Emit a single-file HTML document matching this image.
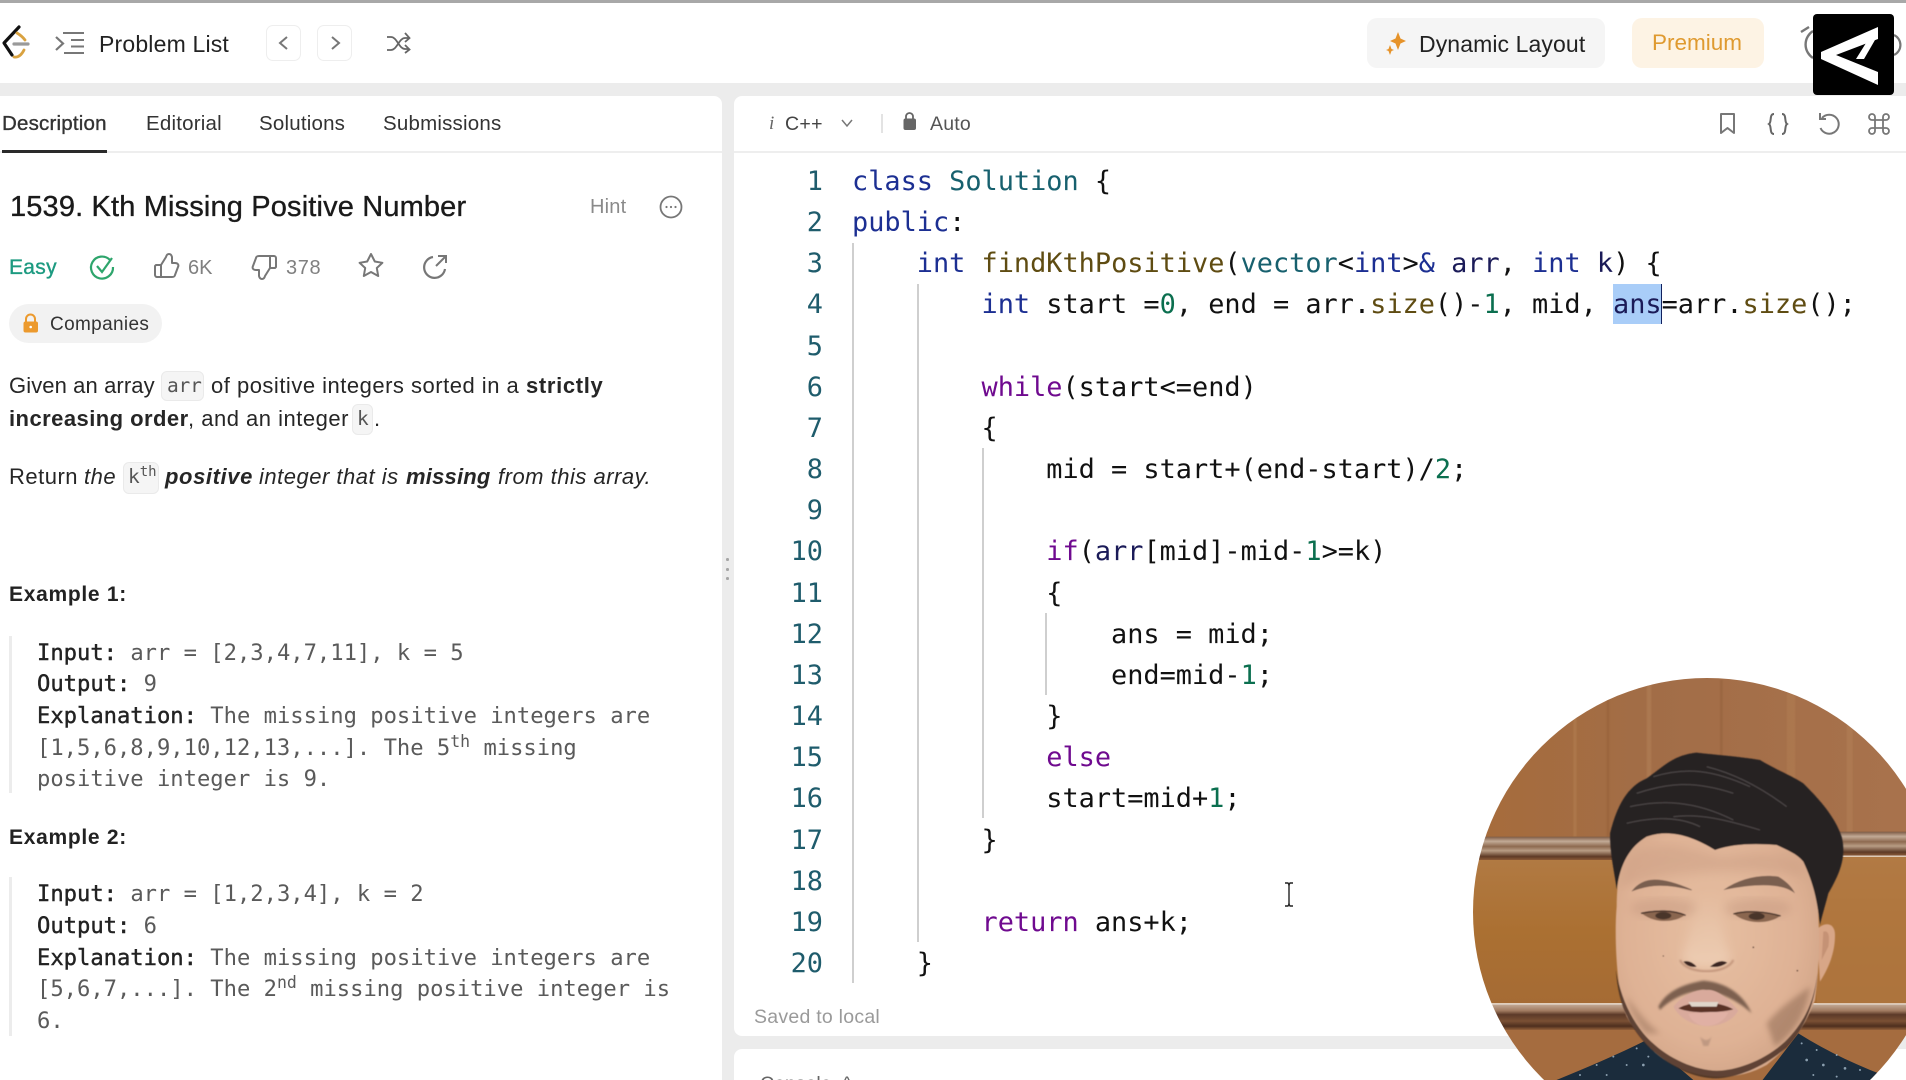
<!DOCTYPE html>
<html><head><meta charset="utf-8"><style>
html,body{margin:0;padding:0;width:1906px;height:1080px;overflow:hidden;background:#fff;font-family:"Liberation Sans",sans-serif;color:#262626}
#w{position:relative;width:1906px;height:1080px;overflow:hidden;background:#fff;filter:blur(.3px)}
.b{position:absolute}
.t{position:absolute;white-space:pre;line-height:40px;height:40px;margin-top:1px}
.s{-webkit-text-stroke:.35px currentColor}
.tab{font-size:20.5px;letter-spacing:.2px;top:103px;color:#333}
.p{font-size:22px;letter-spacing:.5px;color:#262626}
.bd{font-weight:bold;letter-spacing:.45px}
.i{font-style:italic}
.chip{position:absolute;background:#f5f5f5;border:1px solid #eaeaea;border-radius:6px;box-sizing:border-box}
.m{font-family:"DejaVu Sans Mono",monospace;font-size:22.15px;color:#5a5a5a;letter-spacing:0;position:absolute;white-space:pre;line-height:32px;height:32px;left:37px;margin-top:1px}
.m b{font-weight:normal;color:#222;-webkit-text-stroke:.4px #222}
.m sup{font-size:16.5px;line-height:0;vertical-align:8px}
.ex{font-size:21px;font-weight:bold;letter-spacing:.7px;left:9px;color:#222}
.n,.c{font-family:"DejaVu Sans Mono",monospace;font-size:26.9px;position:absolute;white-space:pre;line-height:41px;height:41px;margin-top:1px}
.n{left:750px;width:73px;text-align:right;color:#1f5c6c}
.c{left:852px;color:#111}
.k{color:#1c2f92}.ty{color:#17606e}.f{color:#5f4c12}.d{color:#0b6f4f}.w{color:#6f0a8f}.v{color:#1b1b58}
.g{position:absolute;width:1.5px;background:#cfcfcf}
</style></head><body><div id="w">

<!-- frame -->
<div class="b" style="left:0;top:0;width:1906px;height:3px;background:#a8a8a8"></div>
<div class="b" style="left:0;top:83px;width:1906px;height:997px;background:#ececec"></div>
<div class="b" style="left:0;top:96px;width:722px;height:984px;background:#fff;border-top-right-radius:8px"></div>
<div class="b" style="left:734px;top:96px;width:1172px;height:940px;background:#fff;border-radius:8px 0 0 8px"></div>
<div class="b" style="left:734px;top:1049px;width:1172px;height:31px;background:#fff;border-radius:8px 0 0 0"></div>
<div class="b" style="left:0;top:151px;width:722px;height:1.5px;background:#eee"></div>
<div class="b" style="left:2px;top:150px;width:105px;height:2.5px;background:#2a2a2a"></div>
<div class="b" style="left:734px;top:151px;width:1172px;height:1.5px;background:#eee"></div>
<div class="b" style="left:726px;top:558px;width:2.5px;height:2.5px;background:#a5a5a5;border-radius:50%"></div>
<div class="b" style="left:726px;top:568px;width:2.5px;height:2.5px;background:#a5a5a5;border-radius:50%"></div>
<div class="b" style="left:726px;top:577px;width:2.5px;height:2.5px;background:#a5a5a5;border-radius:50%"></div>

<!-- header -->
<div class="t" style="left:99px;top:23px;font-size:23px;letter-spacing:.18px;color:#222">Problem List</div>
<div class="b" style="left:266px;top:25px;width:35px;height:36px;box-sizing:border-box;border:1.5px solid #eee;border-radius:7px"></div>
<div class="b" style="left:317px;top:25px;width:35px;height:36px;box-sizing:border-box;border:1.5px solid #eee;border-radius:7px"></div>
<div class="b" style="left:1367px;top:18px;width:238px;height:50px;background:#f5f5f5;border-radius:10px"></div>
<div class="t" style="left:1419px;top:23px;font-size:23px;letter-spacing:.1px;color:#222">Dynamic Layout</div>
<div class="b" style="left:1632px;top:18px;width:132px;height:50px;background:#fdf3e4;border-radius:10px"></div>
<div class="t" style="left:1652px;top:22px;font-size:22.5px;color:#df9a30">Premium</div>

<!-- tabs -->
<div class="t tab s" style="left:2px">Description</div>
<div class="t tab" style="left:146px">Editorial</div>
<div class="t tab" style="left:259px">Solutions</div>
<div class="t tab" style="left:383px">Submissions</div>

<!-- title -->
<div class="t s" style="left:10px;top:186px;font-size:29px;letter-spacing:.15px;color:#1a1a1a">1539. Kth Missing Positive Number</div>
<div class="t" style="left:590px;top:186px;font-size:20px;letter-spacing:.2px;color:#8a8a8a">Hint</div>
<div class="t s" style="left:9px;top:247px;font-size:21px;letter-spacing:.3px;color:#1c9a80">Easy</div>
<div class="t" style="left:188px;top:247px;font-size:20px;color:#808080">6K</div>
<div class="t" style="left:286px;top:247px;font-size:20px;letter-spacing:.6px;color:#808080">378</div>
<div class="b" style="left:9px;top:304px;width:153px;height:39px;background:#f2f2f2;border-radius:20px"></div>
<div class="t" style="left:50px;top:304px;font-size:19px;letter-spacing:.35px;color:#333">Companies</div>

<!-- description -->
<div class="chip" style="left:161px;top:371px;width:43px;height:30px"></div>
<div class="chip" style="left:352px;top:404px;width:21px;height:31px"></div>
<div class="chip" style="left:123px;top:462px;width:36px;height:32px"></div>
<div class="t p" style="left:9px;top:365px;letter-spacing:.1px">Given an array</div>
<div class="t" style="left:167px;top:365px;font:19.5px/40px 'DejaVu Sans Mono',monospace;color:#555;letter-spacing:-.2px">arr</div>
<div class="t p" style="left:211px;top:365px">of positive integers sorted in a</div>
<div class="t p bd" style="left:526px;top:365px;letter-spacing:.65px">strictly</div>
<div class="t p bd" style="left:9px;top:398px">increasing order</div>
<div class="t p" style="left:188px;top:398px">, and an integer</div>
<div class="t" style="left:357px;top:398px;font:19.5px/40px 'DejaVu Sans Mono',monospace;color:#555">k</div>
<div class="t p" style="left:374px;top:398px">.</div>
<div class="t p" style="left:9px;top:456px">Return</div>
<div class="t p i" style="left:84px;top:456px">the</div>
<div class="t" style="left:128px;top:456px;font:19.5px/40px 'DejaVu Sans Mono',monospace;color:#555">k<sup style="font-size:14px;line-height:0;vertical-align:7px">th</sup></div>
<div class="t p bd i" style="left:165px;top:456px;letter-spacing:.6px">positive</div>
<div class="t p i" style="left:259px;top:456px">integer that is</div>
<div class="t p bd i" style="left:406px;top:456px;letter-spacing:.2px">missing</div>
<div class="t p i" style="left:498px;top:456px">from this array.</div>

<!-- examples -->
<div class="t ex" style="top:574px">Example 1:</div>
<div class="b" style="left:9px;top:636px;width:3px;height:157px;background:#ececec"></div>
<div class="m" style="top:636px"><b>Input:</b> arr = [2,3,4,7,11], k = 5</div>
<div class="m" style="top:667px"><b>Output:</b> 9</div>
<div class="m" style="top:699px"><b>Explanation:</b> The missing positive integers are</div>
<div class="m" style="top:731px">[1,5,6,8,9,10,12,13,...]. The 5<sup>th</sup> missing</div>
<div class="m" style="top:762px">positive integer is 9.</div>
<div class="t ex" style="top:817px">Example 2:</div>
<div class="b" style="left:9px;top:877px;width:3px;height:159px;background:#ececec"></div>
<div class="m" style="top:877px"><b>Input:</b> arr = [1,2,3,4], k = 2</div>
<div class="m" style="top:909px"><b>Output:</b> 6</div>
<div class="m" style="top:941px"><b>Explanation:</b> The missing positive integers are</div>
<div class="m" style="top:972px">[5,6,7,...]. The 2<sup>nd</sup> missing positive integer is</div>
<div class="m" style="top:1004px">6.</div>

<!-- toolbar -->
<div class="t i" style="left:769px;top:103px;font-size:19px;font-family:'Liberation Serif',serif;color:#666">i</div>
<div class="t" style="left:785px;top:103px;font-size:19.5px;letter-spacing:.3px;color:#444">C++</div>
<div class="b" style="left:881px;top:114px;width:1.5px;height:19px;background:#e3e3e3"></div>
<div class="t" style="left:930px;top:103px;font-size:19.5px;letter-spacing:.2px;color:#555">Auto</div>

<!-- code guides + selection -->
<div class="g" style="left:852px;top:243px;height:740px"></div>
<div class="g" style="left:917px;top:284px;height:658px"></div>
<div class="g" style="left:982px;top:448px;height:370px"></div>
<div class="g" style="left:1045px;top:613px;height:82px"></div>
<div class="b" style="left:1613px;top:284px;width:48px;height:40px;background:#a9cdf8"></div>
<div class="b" style="left:1660.5px;top:284px;width:1.8px;height:40px;background:#12215e"></div>

<!-- line numbers -->
<div class="n" style="top:160px">1</div><div class="n" style="top:201px">2</div><div class="n" style="top:242px">3</div><div class="n" style="top:283px">4</div><div class="n" style="top:325px">5</div><div class="n" style="top:366px">6</div><div class="n" style="top:407px">7</div><div class="n" style="top:448px">8</div><div class="n" style="top:489px">9</div><div class="n" style="top:530px">10</div><div class="n" style="top:572px">11</div><div class="n" style="top:613px">12</div><div class="n" style="top:654px">13</div><div class="n" style="top:695px">14</div><div class="n" style="top:736px">15</div><div class="n" style="top:777px">16</div><div class="n" style="top:819px">17</div><div class="n" style="top:860px">18</div><div class="n" style="top:901px">19</div><div class="n" style="top:942px">20</div>

<!-- code -->
<div class="c" style="top:160px"><span class="k">class</span> <span class="ty">Solution</span> {</div>
<div class="c" style="top:201px"><span class="k">public</span>:</div>
<div class="c" style="top:242px">    <span class="k">int</span> <span class="f">findKthPositive</span>(<span class="ty">vector</span>&lt;<span class="k">int</span>&gt;<span class="k">&amp;</span> <span class="v">arr</span>, <span class="k">int</span> <span class="v">k</span>) {</div>
<div class="c" style="top:283px">        <span class="k">int</span> start =<span class="d">0</span>, end = arr.<span class="f">size</span>()-<span class="d">1</span>, mid, <span class="v">ans</span>=arr.<span class="f">size</span>();</div>
<div class="c" style="top:366px">        <span class="w">while</span>(start&lt;=end)</div>
<div class="c" style="top:407px">        {</div>
<div class="c" style="top:448px">            mid = start+(end-start)/<span class="d">2</span>;</div>
<div class="c" style="top:530px">            <span class="w">if</span>(<span class="v">arr</span>[mid]-mid-<span class="d">1</span>&gt;=k)</div>
<div class="c" style="top:572px">            {</div>
<div class="c" style="top:613px">                ans = mid;</div>
<div class="c" style="top:654px">                end=mid-<span class="d">1</span>;</div>
<div class="c" style="top:695px">            }</div>
<div class="c" style="top:736px">            <span class="w">else</span></div>
<div class="c" style="top:777px">            start=mid+<span class="d">1</span>;</div>
<div class="c" style="top:819px">        }</div>
<div class="c" style="top:901px">        <span class="w">return</span> ans+k;</div>
<div class="c" style="top:942px">    }</div>

<div class="t" style="left:754px;top:996px;font-size:19.5px;letter-spacing:.25px;color:#9a9a9a">Saved to local</div>
<div class="t" style="left:760px;top:1063px;font-size:19.5px;color:#666">Console  ^</div>

<!-- icons -->
<svg class="b" style="left:0;top:0" width="1906" height="1080" viewBox="0 0 1906 1080" fill="none">
 <!-- logo -->
 <path d="M19 27 L4 43 L12 55" stroke="#111" stroke-width="3.2" stroke-linecap="round" stroke-linejoin="round"/>
 <path d="M17 33 Q22 36 25 40" stroke="#d9a240" stroke-width="2.8" stroke-linecap="round"/>
 <path d="M14 57 Q20 58 24 50" stroke="#d9a240" stroke-width="2.8" stroke-linecap="round"/>
 <path d="M14 44 H28" stroke="#9a9a9a" stroke-width="3.2" stroke-linecap="round"/>
 <!-- list -->
 <path d="M56 37 L63 43.5 L56 50" stroke="#777" stroke-width="2.2"/>
 <path d="M63 33 H84 M71 40 H84 M71 46.5 H84 M64 53 H84" stroke="#777" stroke-width="2"/>
 <!-- nav -->
 <path d="M287 37 L280 43 L287 49" stroke="#777" stroke-width="2"/>
 <path d="M332 37 L339 43 L332 49" stroke="#777" stroke-width="2"/>
 <path d="M387 37 H391 C397 37 399 49 405 49 H409 M387 50 H391 C397 50 399 38 405 38 H409 M405 33 L409.5 38 L405 42 M405 45 L409.5 49.5 L405 53" stroke="#666" stroke-width="1.8"/>
 <!-- dynamic star -->
 <path d="M1397 35 L1399.5 41.5 L1405 44 L1399.5 46.5 L1397 53 L1394.5 46.5 L1389 44 L1394.5 41.5Z" fill="#e6932a" transform="translate(1,-3)"/>
 <path d="M1389 45 L1390.5 49 L1393 50 L1390.5 51 L1389 55 L1387.5 51 L1385 50 L1387.5 49Z" fill="#e6932a" transform="translate(1,0)"/>
 <!-- timer behind logo -->
 <path d="M1813 31 A16 16 0 0 0 1813 58" stroke="#777" stroke-width="2.4"/>
 <path d="M1801 32 L1809 27" stroke="#777" stroke-width="2.4"/>
 <path d="M1894 35 A11 11 0 0 1 1894 55" stroke="#777" stroke-width="2.2"/>
 <rect x="1813" y="14" width="81" height="81" rx="4" fill="#000"/>
 <path d="M1878 27 L1821 52 L1821 59 L1878 85 L1878 72 L1836 55 L1878 39Z" fill="#fff"/>
 <path d="M1875 40 L1864 59 L1856 59 L1866 43Z" fill="#fff"/>
 <g transform="translate(0,1)">
 <!-- hint circle -->
 <circle cx="671" cy="206" r="10.5" stroke="#777" stroke-width="1.8"/>
 <circle cx="666.5" cy="206" r="1.1" fill="#777"/><circle cx="671" cy="206" r="1.1" fill="#777"/><circle cx="675.5" cy="206" r="1.1" fill="#777"/>
 <!-- check -->
 <path d="M110 259 A11 11 0 1 0 113 266" stroke="#2ea56c" stroke-width="2.2"/>
 <path d="M97 265 L102 271 L112 257" stroke="#2ea56c" stroke-width="2.2"/>
 <!-- thumb up -->
 <g stroke="#777" stroke-width="2" stroke-linejoin="round">
  <path d="M161 264 L166 256 C167 252 171 252 172 256 V262 H175 C178 262 179 264 178 266 L175 274 C175 275 174 276 172 276 H161Z"/>
  <path d="M156 264 H161 V276 H157 C156 276 155 275 155 274 V265Z"/>
 </g>
 <g transform="translate(431,531) rotate(180)" stroke="#777" stroke-width="2" stroke-linejoin="round">
  <path d="M161 264 L166 256 C167 252 171 252 172 256 V262 H175 C178 262 179 264 178 266 L175 274 C175 275 174 276 172 276 H161Z"/>
  <path d="M156 264 H161 V276 H157 C156 276 155 275 155 274 V265Z"/>
 </g>
 </g>
 <g transform="translate(0,2)">
 <!-- star -->
 <path d="M371 252 L374.8 259.5 L382.4 260.8 L376.8 266 L378.2 274 L371 270 L363.8 274 L365.2 266 L359.6 260.8 L367.2 259.5Z" stroke="#777" stroke-width="2" stroke-linejoin="round"/>
 <!-- share -->
 <path d="M433 255 A10.5 10.5 0 1 0 445 267" stroke="#777" stroke-width="2.2"/>
 <path d="M436 264 L446 254 M438 254 H446 V261" stroke="#777" stroke-width="2"/>
 </g>
 <!-- orange lock -->
 <path d="M26 322 V319 A4.5 4.5 0 0 1 35 319 V322" stroke="#ec9a2e" stroke-width="2"/>
 <rect x="23.5" y="321.5" width="14.5" height="11" rx="2" fill="#ec9a2e"/>
 <circle cx="30.7" cy="327" r="1.3" fill="#fff"/>
 <!-- toolbar -->
 <path d="M842 120 L847 126 L852 120" stroke="#777" stroke-width="1.5"/>
 <path d="M906 119 V116.5 A3.5 3.5 0 0 1 913 116.5 V119" stroke="#666" stroke-width="1.8"/>
 <rect x="903.5" y="118.5" width="12.5" height="11.5" rx="2" fill="#666"/>
 <path d="M1721 114 H1734 V133 L1727.5 128 L1721 133Z" stroke="#777" stroke-width="2" stroke-linejoin="round"/>
 <path d="M1774 114 C1769 114 1772 122 1769 124 C1772 126 1769 134 1774 134 M1782 114 C1787 114 1784 122 1787 124 C1784 126 1787 134 1782 134" stroke="#666" stroke-width="2"/>
 <path d="M1822 118 A9.5 9.5 0 1 1 1820.5 128 M1820 113 V119 H1826" stroke="#777" stroke-width="2"/>
 <path d="M1875 120 H1883 V128 H1875Z M1875 120 V117 A3 3 0 1 0 1872 120 H1875 M1883 120 V117 A3 3 0 1 1 1886 120 H1883 M1875 128 V131 A3 3 0 1 1 1872 128 H1875 M1883 128 V131 A3 3 0 1 0 1886 128 H1883" stroke="#777" stroke-width="1.8"/>
 <!-- I-beam -->
 <path d="M1285 883 H1288 Q1289 884 1289 886 V903 Q1289 905 1288 906 H1285 M1293 883 H1290 Q1289 884 1289 886 M1293 906 H1290 Q1289 905 1289 903" stroke="#222" stroke-width="1.4"/>
</svg>

<!-- webcam -->
<svg class="b" style="left:1440px;top:660px" width="466" height="420" viewBox="0 0 1398 1260">
 <defs>
  <clipPath id="cp"><circle cx="801" cy="756" r="702"/></clipPath>
  <linearGradient id="up" x1="0" y1="0" x2="1" y2="0"><stop offset="0" stop-color="#a76c39"/><stop offset=".45" stop-color="#a26d47"/><stop offset="1" stop-color="#a8724c"/></linearGradient>
  <linearGradient id="mid" x1="0" y1="0" x2="0" y2="1"><stop offset="0" stop-color="#b17a43"/><stop offset=".5" stop-color="#ab7032"/><stop offset="1" stop-color="#a56b34"/></linearGradient>
  <linearGradient id="mold" x1="0" y1="0" x2="0" y2="1"><stop offset="0" stop-color="#7c5a44"/><stop offset=".2" stop-color="#c2aa96"/><stop offset=".42" stop-color="#8e6a50"/><stop offset=".6" stop-color="#b89c84"/><stop offset=".85" stop-color="#5e3a26"/><stop offset="1" stop-color="#8a5a38"/></linearGradient>
  <linearGradient id="mold2" x1="0" y1="0" x2="0" y2="1"><stop offset="0" stop-color="#c4ab96"/><stop offset=".25" stop-color="#a07a60"/><stop offset=".4" stop-color="#5c3a28"/><stop offset=".65" stop-color="#7a5034"/><stop offset=".85" stop-color="#4e2f1e"/><stop offset="1" stop-color="#93603a"/></linearGradient>
  <radialGradient id="sk" cx=".47" cy=".45" r=".65"><stop offset="0" stop-color="#e6bfa2"/><stop offset=".65" stop-color="#dfb295"/><stop offset="1" stop-color="#cda083"/></radialGradient>
  <linearGradient id="nose" x1="0" y1="0" x2="0" y2="1"><stop offset="0" stop-color="#e8c7ad" stop-opacity="0"/><stop offset="1" stop-color="#efd0b6" stop-opacity=".9"/></linearGradient>
  <filter id="b2"><feGaussianBlur stdDeviation="2"/></filter>
  <filter id="b3"><feGaussianBlur stdDeviation="3.5"/></filter>
  <filter id="b5"><feGaussianBlur stdDeviation="8"/></filter>
  <filter id="b12"><feGaussianBlur stdDeviation="14"/></filter>
  <filter id="bc"><feGaussianBlur stdDeviation="1.5"/></filter>
 </defs>
 <g clip-path="url(#cp)">
  <rect x="0" y="0" width="1398" height="540" fill="url(#up)"/>
  <g opacity=".35" filter="url(#bc)">
   <rect x="400" y="0" width="10" height="530" fill="#bb8a5a"/><rect x="620" y="60" width="14" height="470" fill="#be8d62"/>
   <rect x="840" y="60" width="8" height="470" fill="#8c5a38"/><rect x="1040" y="100" width="26" height="420" fill="#b88458"/>
   <rect x="1220" y="180" width="18" height="340" fill="#bb8a60"/><rect x="500" y="80" width="8" height="450" fill="#8f5b30"/>
  </g>
  <rect x="0" y="590" width="1398" height="440" fill="url(#mid)"/>
  <rect x="0" y="1110" width="1398" height="150" fill="#a56c3f"/>
  <rect x="1130" y="590" width="268" height="440" fill="#b37a45" opacity=".6"/>
  <rect x="0" y="530" width="560" height="70" fill="url(#mold)"/>
  <rect x="1150" y="515" width="248" height="72" fill="url(#mold)"/>
  <rect x="0" y="1033" width="1398" height="77" fill="url(#mold2)"/>
  <!-- shirt -->
  <path d="M300 1280 C400 1240 520 1190 620 1140 L760 1260 L960 1270 L1075 1120 C1170 1180 1280 1230 1398 1270 V1300 H300Z" fill="#1b2c3c"/>
  <g fill="#9fb4c4" opacity=".85">
   <circle cx="470" cy="1215" r="3"/><circle cx="520" cy="1190" r="3"/><circle cx="560" cy="1215" r="3"/><circle cx="590" cy="1165" r="3"/><circle cx="610" cy="1215" r="4"/><circle cx="625" cy="1190" r="3"/><circle cx="420" cy="1245" r="3"/><circle cx="500" cy="1245" r="3"/><circle cx="1085" cy="1150" r="3"/><circle cx="1100" cy="1200" r="4"/><circle cx="1130" cy="1170" r="3"/><circle cx="1150" cy="1215" r="4"/><circle cx="1190" cy="1185" r="3"/><circle cx="1215" cy="1225" r="4"/><circle cx="1260" cy="1230" r="3"/><circle cx="1120" cy="1245" r="3"/><circle cx="1190" cy="1250" r="3"/>
  </g>
  <g filter="url(#bc)">
  <!-- ear -->
  <path d="M1130 810 C1150 785 1185 785 1185 825 C1185 880 1165 925 1140 965Z" fill="#d8a687"/>
  <path d="M1150 815 C1165 810 1170 825 1165 860 L1145 900Z" fill="#b98668" opacity=".6"/>
  <!-- face -->
  <path d="M530 740 C530 620 560 540 620 480 C700 460 950 470 1080 540 C1120 620 1135 700 1135 770 C1140 860 1135 950 1125 1020 C1095 1100 1060 1150 980 1215 C900 1260 800 1260 720 1225 C650 1195 600 1140 560 1070 C530 1000 522 830 530 740Z" fill="url(#sk)"/>
  <!-- forehead shadow -->
  <path d="M560 600 C650 520 760 570 850 590 C950 575 1030 570 1085 610 L1090 650 C950 620 700 630 540 680Z" fill="#c79a80" opacity=".4" filter="url(#b12)"/>
  <!-- jaw outline and stubble -->
  <path d="M528 930 C532 1010 555 1085 620 1155 C690 1222 760 1255 830 1255 C900 1252 975 1218 1040 1162 C1095 1105 1125 1030 1132 940 C1122 1030 1090 1090 1035 1145 C970 1205 880 1235 820 1232 C740 1225 660 1180 610 1120 C565 1065 540 1000 528 930Z" fill="#40291f" opacity=".8"/>
  <path d="M980 1090 C1020 1040 1070 1010 1110 980 C1100 1060 1060 1120 1005 1160Z" fill="#8a6650" opacity=".5" filter="url(#b5)"/>
  <path d="M560 1010 C590 1050 620 1090 660 1120 L620 1120 C590 1090 570 1050 560 1010Z" fill="#8a6650" opacity=".4" filter="url(#b5)"/>
  <path d="M780 1130 Q800 1150 815 1130 L805 1158 L790 1158Z" fill="#a08070" opacity=".5" filter="url(#b2)"/>
  <!-- hair -->
  <path d="M510 520 C530 440 560 380 620 355 C670 320 700 285 770 278 C830 285 900 290 960 300 C1010 330 1060 350 1090 370 C1140 420 1185 470 1205 530 C1220 590 1200 640 1165 700 C1155 740 1145 770 1140 795 C1132 730 1125 680 1090 605 C1070 580 1040 570 1010 555 C950 550 880 550 825 570 C760 530 690 505 620 530 C570 560 540 610 530 690 C525 640 510 590 510 520Z" fill="#282324"/>
  <g stroke="#5c5556" stroke-width="3.5" fill="none" opacity=".7">
   <path d="M590 400 C680 370 760 360 880 400"/><path d="M570 440 C660 420 760 420 880 480"/><path d="M640 350 C740 320 820 330 930 380"/><path d="M700 470 C780 460 860 480 960 510"/><path d="M800 320 C880 340 960 380 1040 440"/><path d="M560 490 C640 470 720 470 780 500"/>
  </g>
  <!-- brows -->
  <path d="M578 692 C610 652 660 648 755 690 C680 670 630 672 578 692Z" fill="#7a5e50" stroke="#7a5e50" stroke-width="2.5"/>
  <path d="M850 690 C900 655 960 642 1015 650 C1040 665 1055 680 1065 700 C1030 672 960 668 850 690Z" fill="#7a5e50"/>
  <!-- eye sockets -->
  <ellipse cx="670" cy="745" rx="100" ry="30" fill="#bf927a" opacity=".4" filter="url(#b12)"/>
  <ellipse cx="955" cy="745" rx="100" ry="30" fill="#bf927a" opacity=".4" filter="url(#b12)"/>
  <!-- eyes -->
  <path d="M605 760 C640 752 700 750 735 765 C710 785 650 795 605 760Z" fill="#8a6650"/>
  <ellipse cx="670" cy="767" rx="24" ry="11" fill="#4a352c"/>
  <path d="M603 760 C650 750 700 750 737 766" stroke="#3d2a24" stroke-width="4" fill="none"/>
  <path d="M882 762 C920 748 980 755 1020 768 C990 792 920 795 882 762Z" fill="#8a6650"/>
  <ellipse cx="950" cy="769" rx="24" ry="11" fill="#4a352c"/>
  <path d="M880 762 C920 750 980 755 1022 768" stroke="#3d2a24" stroke-width="4" fill="none"/>
  <!-- nose -->
  <path d="M770 700 C760 780 740 850 725 895 C745 930 850 930 875 895 C850 850 840 780 835 700Z" fill="url(#nose)" filter="url(#b12)"/>
  <path d="M730 905 Q750 898 770 920 Q745 925 730 905Z" fill="#3a2622"/>
  <path d="M810 920 Q840 895 862 908 Q840 925 810 920Z" fill="#3a2622"/>
  <path d="M720 900 C740 945 860 945 880 900" stroke="#c09278" stroke-width="6" fill="none" filter="url(#b2)"/>
  <!-- moustache -->
  <path d="M655 1040 C680 990 740 970 790 962 C840 965 905 990 935 1060 C900 1028 850 998 790 992 C735 995 690 1020 660 1050Z" fill="#7d6050" filter="url(#b3)"/>
  <!-- mouth -->
  <path d="M700 1040 C730 1000 780 985 800 990 C830 985 870 1020 895 1052 C860 1115 740 1115 700 1040Z" fill="#d9aa9c"/>
  <path d="M715 1045 C750 1022 840 1022 880 1048 C840 1058 760 1063 715 1045Z" fill="#5a3028"/>
  <path d="M745 1026 L835 1026 L830 1040 L755 1040Z" fill="#e0d5ca"/>
  <path d="M745 1062 C780 1055 840 1055 865 1058 C840 1105 770 1115 745 1062Z" fill="#e0b0a4"/>
  <circle cx="940" cy="862" r="2.5" fill="#4a3228"/><circle cx="1072" cy="932" r="2.5" fill="#4a3228"/><circle cx="670" cy="888" r="2" fill="#4a3228"/>
  </g>
 </g>
</svg>
</div></body></html>
